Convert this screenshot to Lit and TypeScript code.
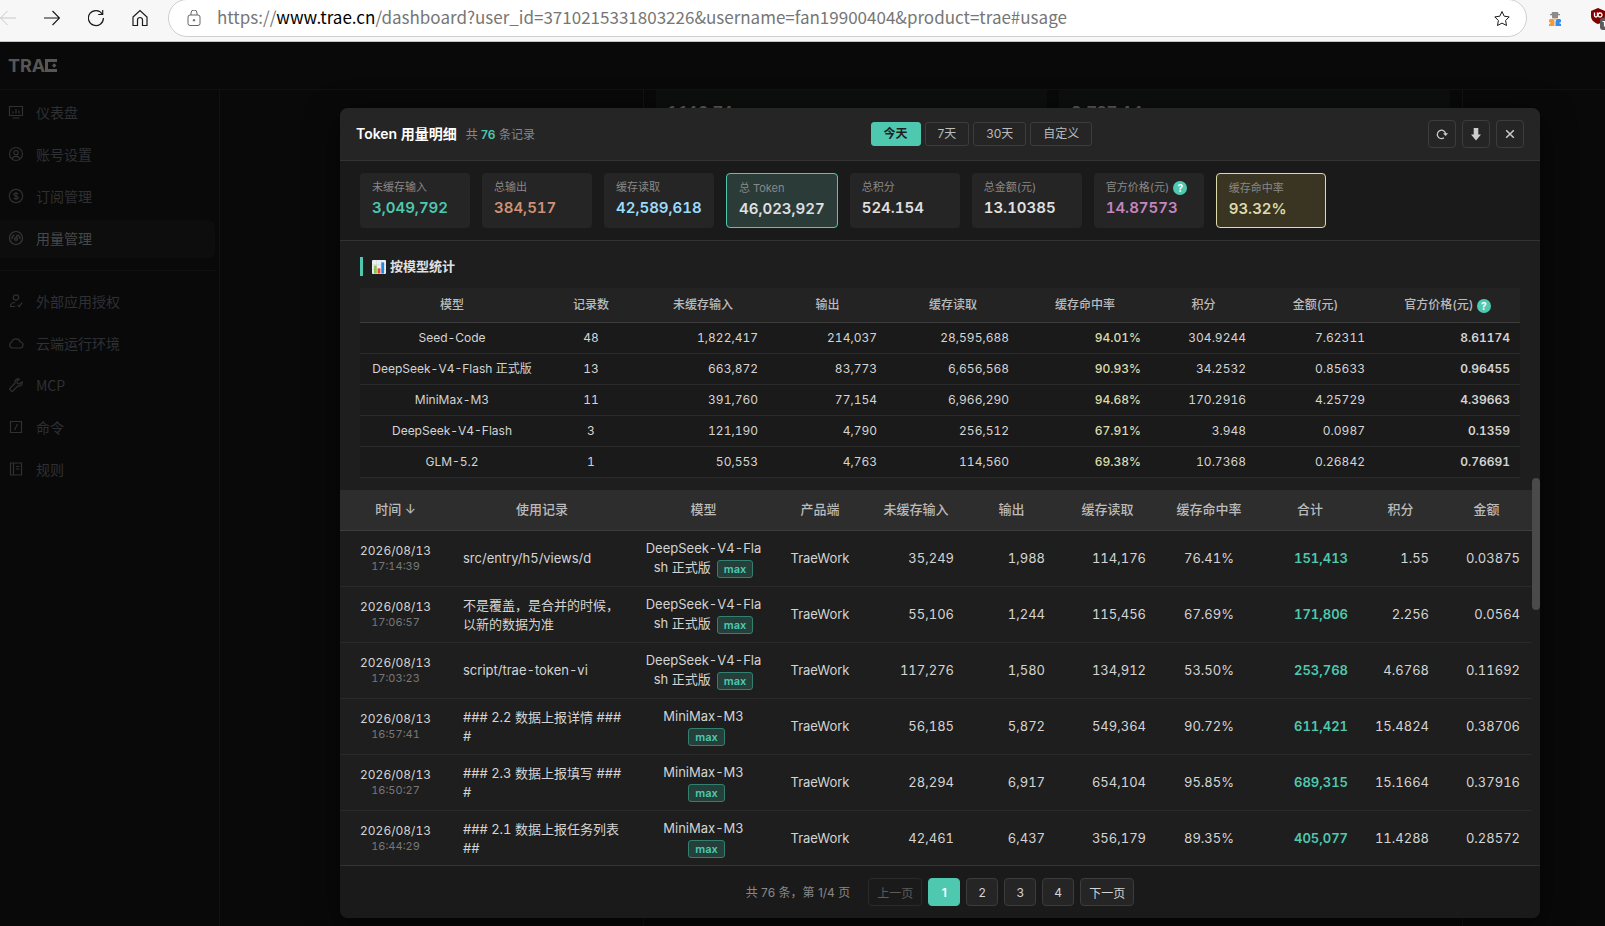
import { LitElement, html, css, svg, nothing } from "lit";
import { customElement, state } from "lit/decorators.js";

type ModelRow = [string, string, string, string, string, string, string, string, string];
type UsageRow = {
  time: string; note: string; model: string; input: string; output: string;
  cache: string; rate: string; total: string; points: string; amount: string;
};

const MODELS: ModelRow[] = [
  ["Seed-Code", "48", "1,822,417", "214,037", "28,595,688", "94.01%", "304.9244", "7.62311", "8.61174"],
  ["DeepSeek-V4-Flash 正式版", "13", "663,872", "83,773", "6,656,568", "90.93%", "34.2532", "0.85633", "0.96455"],
  ["MiniMax-M3", "11", "391,760", "77,154", "6,966,290", "94.68%", "170.2916", "4.25729", "4.39663"],
  ["DeepSeek-V4-Flash", "3", "121,190", "4,790", "256,512", "67.91%", "3.948", "0.0987", "0.1359"],
  ["GLM-5.2", "1", "50,553", "4,763", "114,560", "69.38%", "10.7368", "0.26842", "0.76691"],
];

const FLASH = "DeepSeek-V4-Flash 正式版";
const USAGE: UsageRow[] = [
  { time: "17:14:39", note: "src/entry/h5/views/d", model: FLASH, input: "35,249", output: "1,988", cache: "114,176", rate: "76.41%", total: "151,413", points: "1.55", amount: "0.03875" },
  { time: "17:06:57", note: "不是覆盖，是合并的时候，以新的数据为准", model: FLASH, input: "55,106", output: "1,244", cache: "115,456", rate: "67.69%", total: "171,806", points: "2.256", amount: "0.0564" },
  { time: "17:03:23", note: "script/trae-token-vi", model: FLASH, input: "117,276", output: "1,580", cache: "134,912", rate: "53.50%", total: "253,768", points: "4.6768", amount: "0.11692" },
  { time: "16:57:41", note: "### 2.2 数据上报详情 ####", model: "MiniMax-M3", input: "56,185", output: "5,872", cache: "549,364", rate: "90.72%", total: "611,421", points: "15.4824", amount: "0.38706" },
  { time: "16:50:27", note: "### 2.3 数据上报填写 ####", model: "MiniMax-M3", input: "28,294", output: "6,917", cache: "654,104", rate: "95.85%", total: "689,315", points: "15.1664", amount: "0.37916" },
  { time: "16:44:29", note: "### 2.1 数据上报任务列表 ##", model: "MiniMax-M3", input: "42,461", output: "6,437", cache: "356,179", rate: "89.35%", total: "405,077", points: "11.4288", amount: "0.28572" },
];

const STATS = [
  { label: "未缓存输入", value: "3,049,792", tone: "teal" },
  { label: "总输出", value: "384,517", tone: "orange" },
  { label: "缓存读取", value: "42,589,618", tone: "blue" },
  { label: "总 Token", value: "46,023,927", tone: "boxed-teal" },
  { label: "总积分", value: "524.154", tone: "plain" },
  { label: "总金额(元)", value: "13.10385", tone: "plain" },
  { label: "官方价格(元)", value: "14.87573", tone: "purple", help: true },
  { label: "缓存命中率", value: "93.32%", tone: "boxed-yellow" },
];

const ICONS = {
  board: svg`<path d="M1.5 2.5h13v9h-13zM4.500 14h7M5 9.500V7.500M8 9.500V5M11 9.500V6.500"/>`,
  user: svg`<circle cx="8" cy="8" r="6.5"/><circle cx="8" cy="6.7" r="2.2"/><path d="M4 12.8c.6-1.700 2-2.500 4-2.500s3.400.8 4 2.500"/>`,
  dollar: svg`<circle cx="8" cy="8" r="6.700"/><path d="M10.200 6.200c-.3-.8-1.100-1.200-2.200-1.200-1.200 0-2.200.5-2.200 1.500 0 2 4.400 1 4.400 3 0 1-1 1.500-2.200 1.500s-2-.4-2.300-1.200M8 4v8"/>`,
  gauge: svg`<circle cx="8" cy="8" r="6.500"/><path d="M4 9a4 4 0 0 1 2.500-4M9.500 5A4 4 0 0 1 12 9M8.300 8l1-3"/><circle cx="8" cy="9" r="1.300"/>`,
  auth: svg`<circle cx="8" cy="4.500" r="2.700"/><path d="M7 13.500H2.500c0-2.500 2-4 4.700-4M9.500 12l1.700 1.700 2.800-4"/>`,
  cloud: svg`<path d="M4.500 13h7.200a3 3 0 0 0 .6-6A4.500 4.500 0 0 0 3.700 7.200 3 3 0 0 0 4.500 13z"/>`,
  wrench: svg`<path d="M14 4.800L11.500 7 9.300 6.500 9 4.500l2.200-2.500C8.800 1.300 6.300 3.300 7 6.200L1.800 11.500v.9l1.900 1.900h.8L9.800 9c3 .7 5-1.700 4.200-4.200z"/>`,
  slash: svg`<path d="M2.500 2.500h11v11h-11zM9.500 5l-3 6"/>`,
  book: svg`<path d="M2.500 2h11v12h-11zM5.500 2v12M8 5.500h3.200M8 8h3.200"/>`,
};

const NAV_TOP = [
  { icon: ICONS.board, text: "仪表盘" },
  { icon: ICONS.user, text: "账号设置" },
  { icon: ICONS.dollar, text: "订阅管理" },
  { icon: ICONS.gauge, text: "用量管理", active: true },
];
const NAV_BOTTOM = [
  { icon: ICONS.auth, text: "外部应用授权" },
  { icon: ICONS.cloud, text: "云端运行环境" },
  { icon: ICONS.wrench, text: "MCP" },
  { icon: ICONS.slash, text: "命令" },
  { icon: ICONS.book, text: "规则" },
];

@customElement("browser-bar")
export class BrowserBar extends LitElement {
  static styles = css`
    :host {
      display: flex;
      align-items: center;
      height: 41px;
      background: #f7f7f7;
      border-bottom: 1px solid #c4c4c4;
      overflow: hidden;
      font-family: "Noto Sans CJK SC", sans-serif;
    }
    .nav { display: flex; gap: 28px; padding: 0 20px 6px 0; }
    button { display: block; border: 0; padding: 0; background: none; color: #1b1b1b; }
    svg { display: block; fill: none; stroke: currentColor; }
    .dim { color: #c8c8c8; }
    .address {
      flex: 1;
      display: flex;
      align-items: center;
      gap: 16px;
      box-sizing: border-box;
      height: 38px;
      margin-bottom: 6px;
      padding: 2px 15px 0 18px;
      background: #fff;
      border: 1px solid #cfcfcf;
      border-radius: 19px;
      color: #666;
    }
    .url { flex: 1; padding-bottom: 4px; font-size: 17px; line-height: 26px; color: #767676; text-decoration: none; white-space: nowrap; }
    .host { color: #000; }
    .ext { display: flex; align-items: center; gap: 29px; padding: 0 0 4px 21px; width: 57px; }
    .ext svg { flex: none; stroke: none; }
  `;

  render() {
    return html`
      <div class="nav">
        <button class="dim" aria-label="后退"><svg width="16" height="18" viewBox="0 0 16 18"><path d="M16 9H.5M7.500 2L.5 9l7 7"/></svg></button>
        <button aria-label="前进"><svg width="16" height="18" viewBox="0 0 16 18"><path stroke-width="1.200" d="M0 9h15.500M8.500 2l7 7-7 7"/></svg></button>
        <button aria-label="刷新"><svg width="16" height="18" viewBox="0 0 16 18"><path stroke-width="1.200" d="M14.200 5A7.500 7.500 0 1 0 15.400 9M14.700 1v4.500h-4.500"/></svg></button>
        <button aria-label="主页"><svg width="16" height="18" viewBox="0 0 16 18"><path stroke-width="1.200" d="M1 8l7-6.500L15 8v8.500h-4.500v-5.500a2.500 2.500 0 0 0-5 0v5.500H1z"/></svg></button>
      </div>
      <div class="address">
        <svg width="14" height="18" viewBox="0 0 14 18"><rect x="1" y="5" width="12" height="10.500" rx="2"/><path d="M4 5V3a3 3 0 0 1 6 0v2"/><circle cx="7" cy="10.300" r=".8" fill="currentColor"/></svg>
        <a class="url" href="#usage">https://<span class="host">www.trae.cn</span>/dashboard?user_id=3710215331803226&amp;username=fan19900404&amp;product=trae#usage</a>
        <button aria-label="收藏"><svg width="18" height="18" viewBox="0 0 18 18" stroke="#777"><path d="M9 1.500l2.200 4.700 5 .7-3.600 3.600.9 5L9 13.100l-4.500 2.400.9-5L1.800 6.900l5-.7z"/></svg></button>
      </div>
      <div class="ext">
        <svg width="14" height="16" viewBox="0 0 14 16">
          <path fill="#8c8c8c" d="M4 1h6l.5 2H12v1.200H2V3h1.500zM4 4.200h6V7L7 8.500 4 7z"/>
          <path fill="#f0c08a" d="M5 7h4v2.500H5z"/>
          <path fill="#f29a3f" d="M2 8h3l1.500 2.500V15H1v-2l2-1-2-1V9z"/>
          <path fill="#2e8ef0" d="M12 8H9L7.500 10.500V15H13v-2l-2-1 2-1V9z"/>
        </svg>
        <svg width="18" height="22" viewBox="0 0 18 22">
          <path fill="#800000" d="M0 3l7-3 7 3v5c0 4-3 6.500-7 8-4-1.500-7-4-7-8z"/>
          <path fill="none" stroke="#fff" stroke-width="1.300" d="M3.500 4.500V7.500a1.500 1.500 0 0 0 3 0V4.500M9 5a2 2 0 1 0 .1 0"/>
          <rect x="9" y="10" width="14" height="12" rx="3" fill="#5c5c5c"/>
          <path fill="none" stroke="#fff" stroke-width="1.200" d="M11.500 13.500h2v5"/>
        </svg>
      </div>
    `;
  }
}

@customElement("dashboard-page")
export class DashboardPage extends LitElement {
  static styles = css`
    :host {
      flex: 1;
      display: flex;
      flex-direction: column;
      min-height: 0;
      background: #090909;
      color: #2f3033;
      font-family: "Noto Sans CJK SC", sans-serif;
    }
    header { height: 47px; display: flex; align-items: center; padding: 0 8px; border-bottom: 1px solid #111; }
    .logo { display: flex; align-items: center; color: #565656; font: 700 18px/20px Inter, sans-serif; }
    .logo svg { display: block; fill: currentColor; }
    .body { flex: 1; display: grid; grid-template-columns: 220px 1fr; min-height: 0; }
    nav { border-right: 1px solid #111; padding-top: 4px; }
    .item {
      display: flex;
      align-items: center;
      gap: 12px;
      box-sizing: border-box;
      height: 38px;
      margin: 0 4px 4px 0;
      padding: 0 0 2px 8px;
      font-size: 14px;
      color: inherit;
      text-decoration: none;
      border-radius: 0 6px 6px 0;
    }
    .item svg { display: block; fill: none; stroke: currentColor; stroke-width: 1.200; }
    .active { background: #0d0d0d; color: #47484b; }
    .active svg { color: #38393b; }
    hr { border: 0; border-top: 1px solid #111; margin: 12px 4px 12px 0; }
    main { display: flex; }
    .panel {
      flex: 1;
      display: grid;
      grid-template-columns: 1fr 1fr;
      gap: 12px;
      margin: 0 142px 0 423px;
      padding: 0 12px;
      border: 1px solid #121313;
      border-width: 0 1px;
      box-sizing: border-box;
    }
    .figure { height: 100px; padding: 13px 12px; background: #0d0e0e; font: 600 17px/20px Inter, sans-serif; color: #5c5c5c; }
  `;

  private link(item: { icon: unknown; text: string; active?: boolean }) {
    return html`<a class="item ${item.active ? "active" : ""}" href="#">
      <svg width="16" height="16" viewBox="0 0 16 16">${item.icon}</svg>${item.text}</a>`;
  }

  render() {
    return html`
      <header>
        <div class="logo" role="img" aria-label="TRAE">TRA<svg width="12" height="13" viewBox="0 0 12 13"><path d="M0 0h12v3H3v7h9v3H0zM9.200 4.300l2.200 2.200-2.200 2.200L7 6.500z"/></svg></div>
      </header>
      <div class="body">
        <nav>${NAV_TOP.map((i) => this.link(i))}<hr />${NAV_BOTTOM.map((i) => this.link(i))}</nav>
        <main>
          <div class="panel"><div class="figure">1,146.74</div><div class="figure">2,737.44</div></div>
        </main>
      </div>
    `;
  }
}

@customElement("usage-dialog")
export class UsageDialog extends LitElement {
  @state() private range = "今天";
  @state() private page = 1;

  static styles = css`
    :host {
      display: flex;
      flex-direction: column;
      overflow: hidden;
      background: #1e1e1e;
      color: #d4d4d4;
      border-radius: 8px;
      box-shadow: 0 8px 32px rgba(0, 0, 0, 0.6);
      font-family: Inter, "Noto Sans CJK SC", sans-serif;
      font-size: 13px;
    }
    button { font: inherit; color: inherit; cursor: pointer; }
    .head {
      display: flex;
      align-items: center;
      justify-content: space-between;
      padding: 12px 16px;
      background: #252525;
      border-bottom: 1px solid #333;
    }
    .heading { display: flex; align-items: baseline; gap: 9px; }
    h2 { margin: 0; font-size: 14px; line-height: 20px; font-weight: 600; color: #fff; }
    .count { font-size: 12px; color: #888; }
    .count strong { color: #4ec9b0; font-weight: 600; }
    .ranges { display: flex; gap: 4px; }
    .ranges button {
      height: 24px;
      padding: 0 12px;
      border: 1px solid #3c3c3c;
      border-radius: 3px;
      background: none;
      font-size: 12px;
      line-height: 16px;
      color: #bbb;
    }
    .ranges .on { background: #4ec9b0; border-color: #4ec9b0; color: #1e1e1e; font-weight: 600; }
    .tools { display: flex; gap: 6px; }
    .tools button {
      display: grid;
      place-items: center;
      width: 28px;
      height: 28px;
      padding: 0;
      border: 1px solid #3c3c3c;
      border-radius: 4px;
      background: none;
      color: #ccc;
    }
    .tools svg { display: block; fill: none; stroke: currentColor; stroke-width: 1.500; }
    .stats { display: flex; gap: 12px; padding: 12px 20px; background: #1a1a1a; border-bottom: 1px solid #333; }
    .stat {
      box-sizing: border-box;
      min-width: 110px;
      height: 55px;
      padding: 6px 12px;
      border-radius: 4px;
      background: #252525;
      font-variant-numeric: tabular-nums;
    }
    .label { display: flex; align-items: center; gap: 4px; font-size: 11px; line-height: 17px; color: #888; white-space: nowrap; }
    .value { font-size: 15px; line-height: 24px; font-weight: 600; color: #e0e0e0; }
    .teal .value { color: #4ec9b0; }
    .orange .value { color: #ce9178; }
    .blue .value { color: #9cdcfe; }
    .purple .value { color: #c586c0; }
    .boxed-teal { border: 1px solid #4ec9b0; background: #2a3b38; }
    .boxed-yellow { border: 1px solid #dcdcaa; background: #3a3423; }
    .boxed-yellow .value { color: #dcdcaa; }
    .help {
      display: inline-grid;
      place-items: center;
      width: 14px;
      height: 14px;
      border-radius: 50%;
      background: #4ec9b0;
      color: #fff;
      font-size: 10px;
      line-height: 14px;
      font-weight: 700;
      vertical-align: middle;
    }
    .summary { padding: 16px 20px 0; }
    h3 {
      display: flex;
      align-items: center;
      gap: 4px;
      margin: 0 0 12px;
      padding-left: 9px;
      border-left: 3px solid #4ec9b0;
      font-size: 13px;
      line-height: 19px;
      font-weight: 600;
      color: #e0e0e0;
    }
    table { width: 100%; table-layout: fixed; border-collapse: separate; border-spacing: 0; font-variant-numeric: tabular-nums; }
    th { font-weight: 500; color: #bbb; text-align: center; white-space: nowrap; }
    .models { background: #1a1a1a; font-size: 12px; line-height: 18px; }
    .models th { height: 34px; padding: 0; background: #232323; border-bottom: 1px solid #3c3c3c; }
    .models td { height: 30px; padding: 0 10px; border-bottom: 1px solid #2a2a2a; white-space: nowrap; }
    .center { text-align: center; }
    .right { text-align: right; }
    .models .rate { color: #dcdcaa; font-weight: 500; }
    .strong { font-weight: 600; }
    .list { flex: 1; min-height: 0; display: grid; grid-template-columns: 1fr 8px; }
    .scroll { overflow: hidden; padding-top: 12px; min-height: 0; }
    .thumb { height: 34%; border-radius: 4px; background: #4a4a4a; }
    .usage { line-height: 19px; }
    .usage th { height: 38px; padding: 0 0 2px; background: #2d2d2d; border-bottom: 1px solid #3c3c3c; }
    .usage td { height: 55px; padding: 0 12px; border-bottom: 1px solid #2a2a2a; word-break: break-all; }
    .usage .when { height: 53px; padding-bottom: 2px; }
    .usage .note { padding-right: 8px; }
    .date { font-size: 12px; line-height: 16px; }
    .clock { font-size: 11px; line-height: 14px; color: #777; }
    .total { color: #4ec9b0; font-weight: 600; }
    .max {
      display: inline-block;
      margin-left: 6px;
      padding: 0 6px;
      border: 1px solid #33806f;
      border-radius: 3px;
      background: #25403a;
      color: #4ec9b0;
      font-size: 11px;
      line-height: 16px;
      font-weight: 600;
      vertical-align: middle;
    }
    .foot {
      display: flex;
      align-items: center;
      justify-content: center;
      gap: 6px;
      padding: 12px;
      background: #1a1a1a;
      border-top: 1px solid #333;
      font-size: 12px;
    }
    .info { margin-right: 12px; padding-bottom: 2px; color: #888; }
    .foot button {
      min-width: 32px;
      height: 28px;
      padding: 0 8px;
      border: 1px solid #3c3c3c;
      border-radius: 4px;
      background: #252525;
    }
    .foot .on { background: #4ec9b0; border-color: #4ec9b0; color: #fff; font-weight: 600; }
    .foot button:disabled { background: none; border-color: #2a2a2a; color: #5c5c5c; cursor: default; }
  `;

  private help() {
    return html`<span class="help">?</span>`;
  }

  private cols(widths: number[]) {
    const sum = widths.reduce((a, b) => a + b, 0);
    return html`<colgroup>${widths.map((w) => html`<col style="width:${(w / sum) * 100}%" />`)}</colgroup>`;
  }

  private renderModels() {
    const heads = ["模型", "记录数", "未缓存输入", "输出", "缓存读取", "缓存命中率", "积分", "金额(元)"];
    return html`<table class="models">
      ${this.cols([184, 94, 130, 119, 132, 132, 105, 119, 145])}
      <thead><tr>${heads.map((h) => html`<th>${h}</th>`)}<th>官方价格(元) ${this.help()}</th></tr></thead>
      <tbody>
        ${MODELS.map((row) => html`<tr>${row.map((v, i) => html`<td class="${i < 2 ? "center" : "right"} ${i === 5 ? "rate" : ""} ${i === 8 ? "strong" : ""}">${v}</td>`)}</tr>`)}
      </tbody>
    </table>`;
  }

  private renderUsage() {
    const heads = ["时间 ↓", "使用记录", "模型", "产品端", "未缓存输入", "输出", "缓存读取", "缓存命中率", "合计", "积分", "金额"];
    return html`<table class="usage">
      ${this.cols([111, 182, 141, 92, 100, 91, 101, 102, 100, 81, 91])}
      <thead><tr>${heads.map((h) => html`<th>${h}</th>`)}</tr></thead>
      <tbody>
        ${USAGE.map((r) => html`<tr>
          <td class="center when"><div class="date">2026/08/13</div><div class="clock">${r.time}</div></td>
          <td class="note">${r.note}</td>
          <td class="center">${r.model}<span class="max">max</span></td>
          <td class="center">TraeWork</td>
          <td class="right">${r.input}</td>
          <td class="right">${r.output}</td>
          <td class="right">${r.cache}</td>
          <td class="center">${r.rate}</td>
          <td class="right total">${r.total}</td>
          <td class="right">${r.points}</td>
          <td class="right">${r.amount}</td>
        </tr>`)}
      </tbody>
    </table>`;
  }

  render() {
    return html`
      <div class="head">
        <div class="heading"><h2>Token 用量明细</h2><span class="count">共 <strong>76</strong> 条记录</span></div>
        <div class="ranges">
          ${["今天", "7天", "30天", "自定义"].map((r) => html`<button class="${r === this.range ? "on" : ""}" @click=${() => (this.range = r)}>${r}</button>`)}
        </div>
        <div class="tools">
          <button aria-label="刷新"><svg width="14" height="14" viewBox="0 0 14 14"><path stroke-width="1.200" d="M9 10.800A4.200 4.200 0 1 1 10.700 7"/><path fill="currentColor" stroke="none" d="M8 6.200h5L10.600 9z"/></svg></button>
          <button aria-label="下载"><svg width="14" height="14" viewBox="0 0 14 14"><path fill="currentColor" stroke="none" d="M4.700 1h4.600v6.500H12L7 13.500 2 7.500h2.700z"/></svg></button>
          <button aria-label="关闭"><svg width="14" height="14" viewBox="0 0 14 14"><path d="M3.200 3.200l7.600 7.600M10.800 3.200l-7.600 7.600"/></svg></button>
        </div>
      </div>
      <div class="stats">
        ${STATS.map((s) => html`<div class="stat ${s.tone}">
          <div class="label">${s.label}${s.help ? this.help() : nothing}</div>
          <div class="value">${s.value}</div>
        </div>`)}
      </div>
      <div class="summary">
        <h3>
          <svg width="14" height="14" viewBox="0 0 15 15"><rect width="15" height="15" rx="1" fill="#eceff1"/><path stroke="#c5ccd0" stroke-width=".5" d="M0 5h15M0 10h15M5 0v15M10 0v15"/><rect x="2" y="6" width="3" height="8.500" fill="#8bc34a"/><rect x="6" y="9" width="3" height="5.500" fill="#f44336"/><rect x="10" y="2.500" width="3" height="12" fill="#1e88e5"/></svg>
          按模型统计
        </h3>
        ${this.renderModels()}
      </div>
      <div class="list">
        <div class="scroll">${this.renderUsage()}</div>
        <div class="thumb"></div>
      </div>
      <div class="foot">
        <span class="info">共 76 条，第 ${this.page}/4 页</span>
        <button ?disabled=${this.page === 1} @click=${() => this.page--}>上一页</button>
        ${[1, 2, 3, 4].map((p) => html`<button class="${p === this.page ? "on" : ""}" @click=${() => (this.page = p)}>${p}</button>`)}
        <button ?disabled=${this.page === 4} @click=${() => this.page++}>下一页</button>
      </div>
    `;
  }
}

@customElement("app-root")
export class AppRoot extends LitElement {
  static styles = css`
    :host { display: flex; flex-direction: column; position: relative; height: 100vh; overflow: hidden; }
    .dialog { position: absolute; top: 108px; right: 65px; bottom: 8px; left: 340px; }
  `;

  render() {
    return html`
      <browser-bar></browser-bar>
      <dashboard-page></dashboard-page>
      <usage-dialog class="dialog" role="dialog"></usage-dialog>
    `;
  }
}
